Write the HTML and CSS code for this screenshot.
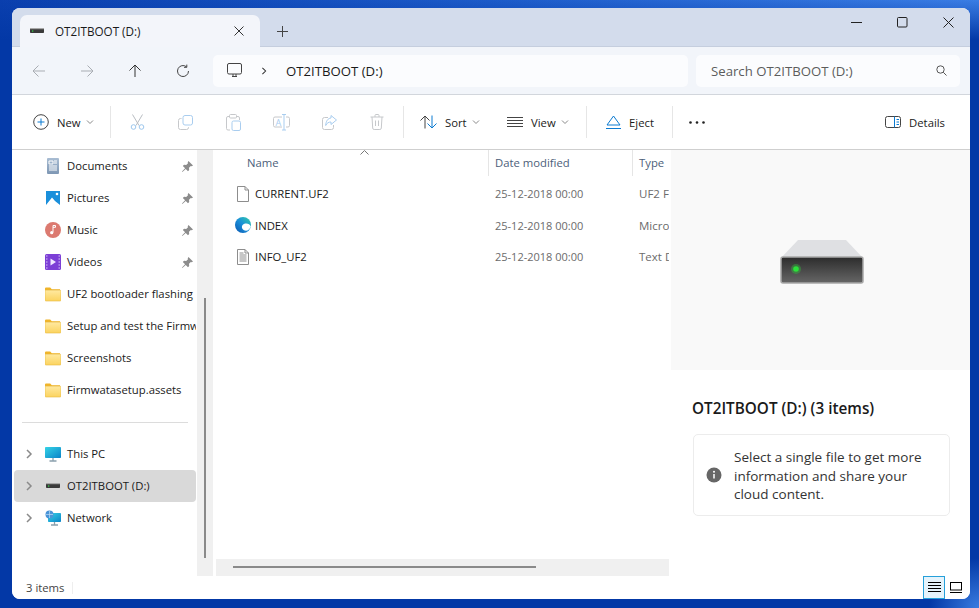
FILE: index.html
```html
<!DOCTYPE html>
<html>
    <head>
        <title>OT2ITBOOT (D:) - File Explorer</title>
        <link rel="stylesheet" href="styles.css">
    </head>
    <body>
        <svg class="defs" width="0" height="0">
            <defs>
                <linearGradient id="folderFill" x1="0" y1="0" x2="0" y2="1"><stop offset="0" stop-color="#ffe9a0"/><stop offset="1" stop-color="#fbd35f"/></linearGradient>
                <linearGradient id="screenFill" x1="0" y1="0" x2="1" y2="1"><stop offset="0" stop-color="#35d3e6"/><stop offset="1" stop-color="#0b83c8"/></linearGradient>
                <linearGradient id="driveFront" x1="0" y1="0" x2="0" y2="1"><stop offset="0" stop-color="#2c2c2c"/><stop offset="1" stop-color="#666"/></linearGradient>
                <linearGradient id="edgeFill" x1="1" y1="0" x2="0" y2="1"><stop offset="0" stop-color="#35cfa8"/><stop offset=".5" stop-color="#1a8fd8"/><stop offset="1" stop-color="#0a56b0"/></linearGradient>
                <linearGradient id="docFill" x1="0" y1="0" x2="0" y2="1"><stop offset="0" stop-color="#a9bdd3"/><stop offset="1" stop-color="#7e97b4"/></linearGradient>
                <symbol id="folder" viewBox="0 0 16 16"><path d="M0 2.500q0-1 1-1h4.200l1.600 1.700h8.200v1H0z" fill="#f0b429"/><path d="M0 4.200h15q1 0 1 1V14q0 1-1 1H1q-1 0-1-1z" fill="url(#folderFill)" stroke="#e8b93f" stroke-width=".6"/></symbol>
                <symbol id="pin" viewBox="0 0 11 11"><path d="M6.500 0L11 4.500 9.800 5.300 8.800 5 7 6.800 7.200 9 6 10.200 3.700 7.900 .4 11 0 10.600 3.100 7.300.8 5 2 3.800 4.200 4 6 2.200 5.700 1.200z" fill="#8c8c8c"/></symbol>
                <symbol id="chev" viewBox="0 0 10 10"><path d="M3 1l4 4-4 4" fill="none" stroke="#8a8a8a" stroke-width="1.500"/></symbol>
                <symbol id="caret" viewBox="0 0 8 8"><path d="M1 2.500l3 3 3-3" fill="none" stroke="#8a8a8a" stroke-width="1"/></symbol>
                <symbol id="smalldrive" viewBox="0 0 14 6"><rect y="0" width="14" height="5" rx=".8" fill="#3a3a3a"/><rect y="0" width="14" height="1.200" fill="#a8a8a8"/><rect x="2" y="2.400" width="1.300" height="1.300" fill="#35d04a"/></symbol>
            </defs>
        </svg>

        <div class="window">
            <div class="titlebar">
                <div class="tab">
                    <svg class="tabdrive" width="14" height="6"><use href="#smalldrive"/></svg>
                    <span class="tabname">OT2ITBOOT (D:)</span>
                    <svg class="tabclose" width="10" height="10" viewBox="0 0 10 10"><path d="M.5.5l9 9M9.500.5l-9 9" stroke="#333" fill="none"/></svg>
                </div>
                <svg class="newtab" width="11" height="11" viewBox="0 0 11 11"><path d="M5.500 0v11M0 5.500h11" stroke="#444" fill="none"/></svg>
                <div class="wincontrols">
                    <svg width="11" height="11" viewBox="0 0 11 11"><path d="M0 5.500h11" stroke="#222" fill="none"/></svg>
                    <svg width="11" height="11" viewBox="0 0 11 11"><rect x=".5" y=".5" width="9.500" height="9.500" rx="1" stroke="#222" fill="none"/></svg>
                    <svg width="11" height="11" viewBox="0 0 11 11"><path d="M.5.5l10 10M10.500.5l-10 10" stroke="#222" fill="none"/></svg>
                </div>
            </div>

            <div class="navbar">
                <div class="navbtn"><svg width="14" height="14" viewBox="0 0 14 14"><path d="M13 7H1M6.500 1.500L1 7l5.500 5.500" fill="none" stroke="#a9adb3"/></svg></div>
                <div class="navbtn"><svg width="14" height="14" viewBox="0 0 14 14"><path d="M1 7h12M7.500 1.500L13 7l-5.500 5.500" fill="none" stroke="#a9adb3"/></svg></div>
                <div class="navbtn"><svg width="14" height="14" viewBox="0 0 14 14"><path d="M7 13V1M1.500 6.500L7 1l5.500 5.500" fill="none" stroke="#333"/></svg></div>
                <div class="navbtn"><svg width="14" height="14" viewBox="0 0 14 14"><path d="M12.500 7A5.500 5.500 0 1 1 10.500 2.800M10.800 .6v2.700H8" fill="none" stroke="#444"/></svg></div>
                <div class="address">
                    <svg width="15" height="15" viewBox="0 0 15 15"><rect x=".5" y=".5" width="14" height="10.500" rx="1.500" fill="none" stroke="#444"/><path d="M5 13.500h5M6 11v2.500M9 11v2.500" stroke="#444" fill="none"/></svg>
                    <svg class="addrchev" width="8" height="8" viewBox="0 0 10 10"><path d="M3 1l4 4-4 4" fill="none" stroke="#333" stroke-width="1.300"/></svg>
                    <span>OT2ITBOOT (D:)</span>
                </div>
                <div class="search">
                    <span>Search OT2ITBOOT (D:)</span>
                    <svg width="11" height="11" viewBox="0 0 11 11"><circle cx="4.500" cy="4.500" r="3.700" fill="none" stroke="#555"/><path d="M7.300 7.300l3.200 3.200" stroke="#555" fill="none"/></svg>
                </div>
            </div>

            <div class="cmdbar">
                <div class="tool tool-new">
                    <svg width="16" height="16" viewBox="0 0 16 16"><circle cx="8" cy="8" r="7.300" fill="none" stroke="#444"/><path d="M8 4.500v7M4.500 8h7" stroke="#0a7ad1" fill="none"/></svg>
                    <span>New</span>
                    <svg class="caret" width="8" height="8"><use href="#caret"/></svg>
                </div>
                <div class="sep"></div>
                <div class="tool tool-icon"><svg width="15" height="16" viewBox="0 0 15 16"><path d="M2.500 .5l6.500 11M12.500 .5L6 11.500" stroke="#b9bdc2" fill="none"/><circle cx="3.500" cy="13" r="2.300" fill="none" stroke="#9cc6ec"/><circle cx="11.500" cy="13" r="2.300" fill="none" stroke="#9cc6ec"/></svg></div>
                <div class="tool tool-icon"><svg width="15" height="15" viewBox="0 0 15 15"><rect x="5" y=".5" width="9.500" height="9.500" rx="2" fill="none" stroke="#a9cdef"/><path d="M3.500 3.500h-1a2 2 0 0 0-2 2v7a2 2 0 0 0 2 2h6a2 2 0 0 0 2-2v-.500" fill="none" stroke="#c6c8cb"/></svg></div>
                <div class="tool tool-icon"><svg width="15" height="17" viewBox="0 0 15 17"><path d="M3 2.500H2A1.500 1.500 0 0 0 .5 4v10.500A1.500 1.500 0 0 0 2 16h2M11 2.500h1A1.500 1.500 0 0 1 13.500 4v2" fill="none" stroke="#c6c8cb"/><rect x="3.500" y=".5" width="7" height="3.500" rx="1" fill="none" stroke="#c6c8cb"/><rect x="6" y="7" width="8.500" height="9.500" rx="1.500" fill="none" stroke="#a9cdef"/></svg></div>
                <div class="tool tool-icon"><svg width="17" height="17" viewBox="0 0 17 17"><path d="M9 3H2a1.500 1.500 0 0 0-1.500 1.500v7A1.500 1.500 0 0 0 2 13h7M13 3h2a1.500 1.500 0 0 1 1.500 1.500v7A1.500 1.500 0 0 1 15 13h-2" fill="none" stroke="#c6c8cb"/><path d="M9 .5h4M11 .5v15.500M9 16h4" fill="none" stroke="#a9cdef"/><text class="renamemark" x="2.500" y="11.500">A</text></svg></div>
                <div class="tool tool-icon"><svg width="15" height="15" viewBox="0 0 15 15"><path d="M6 2.500H2.500a2 2 0 0 0-2 2v8a2 2 0 0 0 2 2h7a2 2 0 0 0 2-2V10" fill="none" stroke="#c6c8cb"/><path d="M9 .5l5.500 4.500L9 9.500V7C6.500 7 5 8 3.700 10.500 3.900 6 6 3.200 9 3z" fill="none" stroke="#a9cdef"/></svg></div>
                <div class="tool tool-icon"><svg width="14" height="16" viewBox="0 0 14 16"><path d="M.5 3h13M5 3V1.500a1 1 0 0 1 1-1h2a1 1 0 0 1 1 1V3M2 3l.7 11a1.500 1.500 0 0 0 1.500 1.500h5.600a1.500 1.500 0 0 0 1.500-1.500L12 3M5.500 6.500v5.500M8.500 6.500v5.500" fill="none" stroke="#c6c8cb"/></svg></div>
                <div class="sep"></div>
                <div class="tool tool-sort">
                    <svg width="17" height="14" viewBox="0 0 17 14"><path d="M5 13.500V1M.5 5.500L5 1l4.500 4.500" fill="none" stroke="#444"/><path d="M12 .5V13M7.500 8.500L12 13l4.500-4.500" fill="none" stroke="#0a7ad1"/></svg>
                    <span>Sort</span>
                    <svg class="caret" width="8" height="8"><use href="#caret"/></svg>
                </div>
                <div class="tool tool-view">
                    <svg width="16" height="10" viewBox="0 0 16 10"><path d="M0 .5h16M0 3.500h16M0 6.500h16M0 9.500h16" stroke="#444" fill="none"/></svg>
                    <span>View</span>
                    <svg class="caret" width="8" height="8"><use href="#caret"/></svg>
                </div>
                <div class="sep"></div>
                <div class="tool tool-eject">
                    <svg width="15" height="15" viewBox="0 0 15 15"><path d="M7.500 1L14 10H1z" fill="none" stroke="#0a7ad1"/><path d="M0 13.500h15" stroke="#0a7ad1" fill="none"/></svg>
                    <span>Eject</span>
                </div>
                <div class="sep"></div>
                <div class="tool tool-more">
                    <svg width="16" height="3" viewBox="0 0 16 3"><circle cx="1.500" cy="1.500" r="1.300" fill="#222"/><circle cx="8" cy="1.500" r="1.300" fill="#222"/><circle cx="14.500" cy="1.500" r="1.300" fill="#222"/></svg>
                </div>
                <div class="tool tool-details">
                    <svg width="16" height="12" viewBox="0 0 16 12"><rect x=".5" y=".5" width="15" height="11" rx="2" fill="none" stroke="#444"/><path d="M9.500 .5v11" stroke="#0a7ad1" fill="none"/><path d="M11.500 3.500h2.500M11.500 6h2.500M11.500 8.500h2.500" stroke="#0a7ad1" fill="none"/></svg>
                    <span>Details</span>
                </div>
            </div>

            <div class="main">
                <div class="sidebar">
                    <div class="navrow">
                        <svg width="16" height="16" viewBox="0 0 16 16"><rect x="2" width="12" height="16" rx="1" fill="url(#docFill)"/><path d="M4 3h4v3H4zM9 3h3M9 5h3M4 8h8M4 10h8M4 12h8" stroke="#fff" fill="none"/></svg>
                        <span class="navlabel">Documents</span>
                        <svg class="pin" width="11" height="11"><use href="#pin"/></svg>
                    </div>
                    <div class="navrow">
                        <svg width="16" height="16" viewBox="0 0 16 16"><rect x="1" y="1" width="14" height="14" fill="#1a8fdb"/><path d="M1 15l6-7.500L10 11l5 4z" fill="#fff"/><circle cx="12" cy="4" r="1.300" fill="#fff"/></svg>
                        <span class="navlabel">Pictures</span>
                        <svg class="pin" width="11" height="11"><use href="#pin"/></svg>
                    </div>
                    <div class="navrow">
                        <svg width="16" height="16" viewBox="0 0 16 16"><circle cx="8" cy="8" r="8" fill="#dc7a70"/><path d="M8 3.500v7M8 3.500h2.500v1.800H8" stroke="#fff" fill="none"/><circle cx="6.700" cy="10.700" r="1.600" fill="#fff"/></svg>
                        <span class="navlabel">Music</span>
                        <svg class="pin" width="11" height="11"><use href="#pin"/></svg>
                    </div>
                    <div class="navrow">
                        <svg width="16" height="16" viewBox="0 0 16 16"><rect width="16" height="16" rx="1.500" fill="#7c3fd6"/><path d="M1 2h1.500M1 5h1.500M1 8h1.500M1 11h1.500M1 14h1.500M13.500 2H15M13.500 5H15M13.500 8H15M13.500 11H15M13.500 14H15" stroke="#d8c4f7" fill="none"/><path d="M5.500 4.500l5.500 3.500-5.500 3.500z" fill="#efe6ff"/></svg>
                        <span class="navlabel">Videos</span>
                        <svg class="pin" width="11" height="11"><use href="#pin"/></svg>
                    </div>
                    <div class="navrow">
                        <svg width="16" height="16"><use href="#folder"/></svg>
                        <span class="navlabel">UF2 bootloader flashing</span>
                    </div>
                    <div class="navrow">
                        <svg width="16" height="16"><use href="#folder"/></svg>
                        <span class="navlabel">Setup and test the Firmware</span>
                    </div>
                    <div class="navrow">
                        <svg width="16" height="16"><use href="#folder"/></svg>
                        <span class="navlabel">Screenshots</span>
                    </div>
                    <div class="navrow">
                        <svg width="16" height="16"><use href="#folder"/></svg>
                        <span class="navlabel">Firmwatasetup.assets</span>
                    </div>
                    <div class="navdivider"></div>
                    <div class="navrow">
                        <svg class="expander" width="10" height="10"><use href="#chev"/></svg>
                        <svg width="16" height="16" viewBox="0 0 16 16"><rect y="1" width="16" height="11" rx=".8" fill="url(#screenFill)"/><path d="M8 12v2.500M4.500 15h7" stroke="#8aa0ad" stroke-width="1.300" fill="none"/></svg>
                        <span class="navlabel">This PC</span>
                    </div>
                    <div class="navrow navrow-current">
                        <svg class="expander" width="10" height="10"><use href="#chev"/></svg>
                        <svg width="16" height="6" viewBox="0 0 14 6"><use href="#smalldrive"/></svg>
                        <span class="navlabel">OT2ITBOOT (D:)</span>
                    </div>
                    <div class="navrow">
                        <svg class="expander" width="10" height="10"><use href="#chev"/></svg>
                        <svg width="16" height="16" viewBox="0 0 16 16"><rect x="3" y="3" width="13" height="9" rx=".8" fill="url(#screenFill)"/><path d="M9.500 12v2.500M6 15h7" stroke="#8aa0ad" stroke-width="1.300" fill="none"/><circle cx="4.500" cy="4.500" r="4" fill="#4a94d8"/><path d="M1 4.500h7M4.500 1v7" stroke="#bcdcf5" stroke-width=".7" fill="none"/></svg>
                        <span class="navlabel">Network</span>
                    </div>
                </div>
                <div class="sidescroll"><div class="sidethumb"></div></div>

                <div class="content">
                    <div class="listhead">
                        <div class="headcell headname">Name</div>
                        <div class="headcell">Date modified</div>
                        <div class="headcell">Type</div>
                        <svg class="sortmark" width="9" height="5" viewBox="0 0 9 5"><path d="M.5 4.500l4-4 4 4" fill="none" stroke="#777"/></svg>
                    </div>
                    <div class="filerows">
                        <div class="filerow">
                            <div class="filename">
                                <svg width="16" height="16" viewBox="0 0 16 16"><path d="M2.500 .5h7.500l3.500 3.500v11.500h-11z" fill="#fff" stroke="#8d8d8d"/><path d="M10 .5V4h3.500" fill="none" stroke="#8d8d8d"/></svg>
                                <span>CURRENT.UF2</span>
                            </div>
                            <div class="filedate">25-12-2018 00:00</div>
                            <div class="filetype">UF2 File</div>
                        </div>
                        <div class="filerow">
                            <div class="filename">
                                <svg width="16" height="16" viewBox="0 0 16 16"><circle cx="8" cy="8" r="8" fill="url(#edgeFill)"/><path d="M15.800 9.500C15 7 12.500 6 10 6.500 7.500 7 6.500 9 7 11c.6 2 3 3 5.500 2.500 1.500-.8 2.800-2.200 3.300-4z" fill="#fff"/></svg>
                                <span>INDEX</span>
                            </div>
                            <div class="filedate">25-12-2018 00:00</div>
                            <div class="filetype">Microsoft Edge HTML Document</div>
                        </div>
                        <div class="filerow">
                            <div class="filename">
                                <svg width="16" height="16" viewBox="0 0 16 16"><path d="M2.500 .5h7.500l3.500 3.500v11.500h-11z" fill="#fff" stroke="#8d8d8d"/><path d="M10 .5V4h3.500M4.500 4h4M4.500 6h7M4.500 8h7M4.500 10h7M4.500 12h7" fill="none" stroke="#8d8d8d"/></svg>
                                <span>INFO_UF2</span>
                            </div>
                            <div class="filedate">25-12-2018 00:00</div>
                            <div class="filetype">Text Document</div>
                        </div>
                    </div>
                    <div class="hscroll"><div class="hthumb"></div></div>
                </div>

                <div class="preview">
                    <div class="previewtop">
                        <svg width="86" height="46" viewBox="0 0 86 46">
                            <path d="M2 19L19 1h48l17 18z" fill="#dfe0e3"/>
                            <rect x="2" y="18" width="82" height="26" rx="2" fill="url(#driveFront)" stroke="#a8a8a8" stroke-width="1.500"/>
                            <circle cx="17" cy="30" r="5" fill="#2dd63a" opacity=".35"/>
                            <circle cx="17" cy="30" r="2.800" fill="#2be03a"/>
                        </svg>
                    </div>
                    <div class="previewinfo">
                        <div class="previewtitle">OT2ITBOOT (D:) (3 items)</div>
                        <div class="notice">
                            <svg width="16" height="16" viewBox="0 0 16 16"><circle cx="8" cy="8" r="7.500" fill="#666"/><path d="M8 7v4.500" stroke="#fff" stroke-width="1.500" fill="none"/><circle cx="8" cy="4.800" r="1" fill="#fff"/></svg>
                            <p>Select a single file to get more information and share your cloud content.</p>
                        </div>
                    </div>
                </div>
            </div>

            <div class="statusbar">
                <span class="itemcount">3 items</span>
                <div class="statussep"></div>
                <div class="viewtoggle">
                    <div class="viewbtn viewbtn-on"><svg width="13" height="11" viewBox="0 0 13 11"><path d="M0 .5h13M0 3.500h13M0 6.500h13M0 9.500h13" stroke="#000" fill="none"/></svg></div>
                    <div class="viewbtn viewbtn-pane"><svg width="12" height="11" viewBox="0 0 12 11"><rect x=".5" y=".5" width="11" height="7.500" fill="none" stroke="#000"/><path d="M0 10.500h12" stroke="#000" fill="none"/></svg></div>
                </div>
            </div>
        </div>
    </body>
</html>
```

FILE: styles.css
```css
html, body{
    height:100%;
}
body{
    margin:0;
    padding:8px 9px 9px 12px;
    box-sizing:border-box;
    overflow:hidden;
    font-family:"Open Sans","Noto Sans",sans-serif;
    font-size:11.3px;
    color:#1a1a1a;
    background:
        radial-gradient(circle at 100% 100%, #3a7ce0 0, rgba(58,124,224,0) 50px),
        linear-gradient(to bottom, rgba(3,56,166,0) 0, #0338a6 40px),
        linear-gradient(to right, #0a3fae 0, #1c5bc9 50%, #3a7de4 100%);
}
svg{
    display:block;
    flex:none;
}
.defs{
    position:absolute;
}
.window{
    height:100%;
    display:flex;
    flex-direction:column;
    background-color:white;
    border-radius:8px;
    overflow:hidden;
}

/* title bar and tab */
.titlebar{
    height:39px;
    flex:none;
    display:flex;
    background-color:#d3dcec;
    box-sizing:border-box;
    padding:7px 0 0 8px;
    border-bottom:1px solid #c5cede;
}
.tab{
    width:240px;
    height:32px;
    box-sizing:border-box;
    display:flex;
    align-items:center;
    padding:0 16px 0 10px;
    background-color:#f3f5fa;
    border-radius:7px 7px 0 0;
}
.tabname{
    margin-left:11px;
    flex:1;
    font-size:11.7px;
}
.newtab{
    margin:11px 0 0 17px;
}
.wincontrols{
    margin-left:auto;
    margin-top:2px;
    padding-right:16px;
    display:flex;
    gap:35px;
}

/* back/forward row */
.navbar{
    height:48px;
    flex:none;
    box-sizing:border-box;
    display:flex;
    align-items:center;
    padding-left:3px;
    background-color:#f2f5fa;
    border-bottom:1px solid #d2d6dc;
}
.navbtn{
    width:48px;
    display:flex;
    justify-content:center;
}
.address, .search{
    height:32px;
    box-sizing:border-box;
    display:flex;
    align-items:center;
    background-color:#fbfcfe;
    border-radius:5px;
    font-size:13.2px;
}
.address{
    width:475px;
    margin-left:6px;
    padding-left:14px;
}
.addrchev{
    margin:0 18px;
}
.search{
    width:264px;
    margin-left:8px;
    padding:0 13px 0 15px;
    justify-content:space-between;
    color:#5c5c5c;
}

/* command bar */
.cmdbar{
    height:55px;
    flex:none;
    box-sizing:border-box;
    display:flex;
    align-items:center;
    padding-left:10px;
    border-bottom:1px solid #cfcfcf;
}
.sep{
    width:1px;
    height:32px;
    margin:0 2px;
    background-color:#e6e6e6;
}
.tool{
    display:flex;
    align-items:center;
    flex:none;
    box-sizing:border-box;
}
.tool span{
    margin-left:8px;
}
.caret{
    margin-left:5px;
}
.renamemark{
    font-size:9px;
    fill:#a9cdef;
}
.tool-new{
    width:86px;
    padding-left:11px;
}
.tool-icon{
    width:48px;
    justify-content:center;
}
.tool-sort{
    width:87px;
    padding-left:14px;
}
.tool-view{
    width:91px;
    padding-left:14px;
}
.tool-eject{
    width:81px;
    padding-left:17px;
}
.tool-more{
    width:44px;
    justify-content:center;
}
.tool-details{
    margin-left:auto;
    padding-right:25px;
}

/* navigation pane */
.main{
    flex:1;
    min-height:0;
    display:flex;
}
.sidebar{
    width:185px;
    flex:none;
    overflow:hidden;
}
.navrow{
    height:32px;
    box-sizing:border-box;
    display:flex;
    align-items:center;
    margin-left:2px;
    margin-right:1px;
    padding-left:31px;
    border-radius:4px;
    white-space:nowrap;
    overflow:hidden;
}
.navlabel{
    margin-left:6px;
    margin-top:-1px;
}
.pin{
    margin-left:auto;
    margin-right:3px;
}
.expander{
    margin-left:-21px;
    margin-right:11px;
}
.navrow-current{
    background-color:#d9d9d9;
}
.navdivider{
    height:1px;
    margin:16px 9px 15px 10px;
    background-color:#dcdcdc;
}
.sidescroll{
    width:16px;
    flex:none;
    background-color:#f0f0f0;
    margin-right:3px;
}
.sidethumb{
    width:2px;
    height:260px;
    margin:148px 0 0 7px;
    background-color:#8a8a8a;
}

/* file list */
.content{
    width:453px;
    flex:none;
    display:flex;
    flex-direction:column;
    overflow:hidden;
}
.listhead{
    position:relative;
    height:26px;
    flex:none;
    display:grid;
    grid-template-columns:273px 144px 36px;
    margin-bottom:2px;
}
.headcell{
    padding-left:6px;
    border-right:1px solid #e5e5e5;
    line-height:26px;
    color:#4c607a;
    white-space:nowrap;
    overflow:hidden;
}
.headname{
    padding-left:31px;
}
.headcell:last-of-type{
    border-right:0;
}
.sortmark{
    position:absolute;
    left:144px;
    top:0;
}
.filerows{
    flex:1;
}
.filerow{
    height:31.5px;
    display:grid;
    grid-template-columns:272px 144px 37px;
    align-items:center;
}
.filename{
    display:flex;
    align-items:center;
    padding-left:19px;
    gap:4px;
}
.filedate, .filetype{
    padding-left:7px;
    font-size:11px;
    color:#6b6b6b;
    white-space:nowrap;
    overflow:hidden;
}
.filetype{
    font-size:11.5px;
}
.hscroll{
    height:17px;
    flex:none;
    background-color:#f0f0f0;
}
.hthumb{
    width:303px;
    height:2px;
    margin:7px 0 0 17px;
    background-color:#8a8a8a;
}

/* details pane */
.preview{
    flex:1;
    display:flex;
    flex-direction:column;
    margin-left:2px;
}
.previewtop{
    height:220px;
    flex:none;
    display:flex;
    align-items:flex-start;
    justify-content:center;
    box-sizing:border-box;
    padding:89px 0 0 2px;
    background-color:#f9f9f9;
}
.previewinfo{
    padding:27px 20px 0 21px;
}
.previewtitle{
    font-size:15.3px;
    font-weight:600;
    line-height:22px;
}
.notice{
    display:flex;
    align-items:center;
    height:82px;
    box-sizing:border-box;
    margin:15px 0 0 1px;
    padding-left:12px;
    background-color:white;
    border:1px solid #ececec;
    border-radius:5px;
}
.notice p{
    margin:2px 0 0 12px;
    width:205px;
    font-size:13.5px;
    line-height:18.5px;
    color:#333;
}

/* status bar */
.statusbar{
    height:23px;
    flex:none;
    display:flex;
    align-items:center;
    padding-left:14px;
    background-color:white;
    color:#444;
}
.statussep{
    width:1px;
    height:12px;
    margin-left:8px;
    background-color:#eee;
}
.viewtoggle{
    margin-left:auto;
    margin-right:6px;
    display:flex;
    gap:3px;
}
.viewbtn{
    width:22px;
    height:23px;
    box-sizing:border-box;
    display:flex;
    align-items:center;
    justify-content:center;
}
.viewbtn-on{
    background-color:#e5f3fb;
    border:1px solid #26a0da;
}
.viewbtn-pane{
    width:16px;
}
```
